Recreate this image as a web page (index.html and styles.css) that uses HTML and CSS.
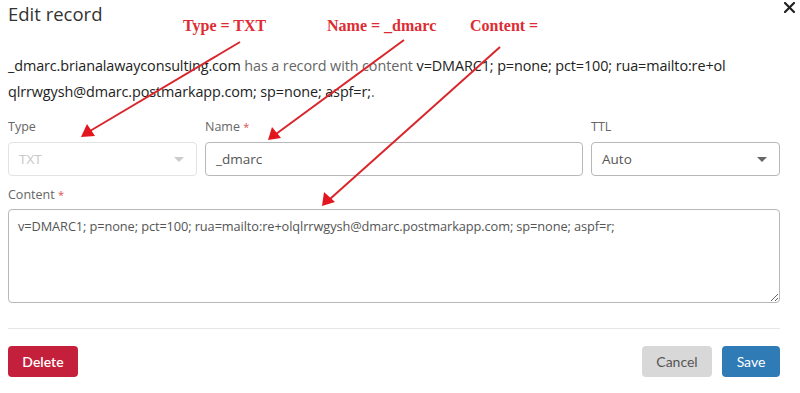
FILE: index.html
```html
<!DOCTYPE html>
<html>
<head>
<meta charset="utf-8">
<link rel="stylesheet" href="styles.css">
</head>
<body>
<div class="modal">
  <div class="modal-header">
    <h1 class="title">Edit record</h1>
    <button class="close" aria-label="Close">
      <svg width="11" height="11" viewBox="0 0 11 11"><path d="M1 1 L10 10 M10 1 L1 10" stroke="#222" stroke-width="2.2" stroke-linecap="round"/></svg>
    </button>
  </div>
  <p class="desc"><span class="strong">_dmarc.brianalawayconsulting.com</span> has a record with content <span class="strong">v=DMARC1; p=none; pct=100; rua=mailto:re+ol<br>qlrrwgysh@dmarc.postmarkapp.com; sp=none; aspf=r;</span>.</p>

  <div class="row">
    <div class="field">
      <label class="label">Type</label>
      <div class="select disabled"><span>TXT</span><span class="caret"></span></div>
    </div>
    <div class="field">
      <label class="label">Name <span class="req">*</span></label>
      <div class="input">_dmarc</div>
    </div>
    <div class="field">
      <label class="label">TTL</label>
      <div class="select"><span>Auto</span><span class="caret dark"></span></div>
    </div>
  </div>

  <div class="field content-field">
    <label class="label">Content <span class="req">*</span></label>
    <textarea class="textarea" readonly>v=DMARC1; p=none; pct=100; rua=mailto:re+olqlrrwgysh@dmarc.postmarkapp.com; sp=none; aspf=r;</textarea>
  </div>

  <hr class="divider">

  <div class="footer">
    <button class="btn btn-danger">Delete</button>
    <div class="right">
      <button class="btn btn-light">Cancel</button>
      <button class="btn btn-primary">Save</button>
    </div>
  </div>
</div>

<div class="annot">
  <svg class="arrows" width="800" height="393" viewBox="0 0 800 393">
    <g stroke="#d9262c" stroke-width="2" fill="none">
      <line x1="240" y1="42" x2="90" y2="131"/>
      <line x1="404" y1="40" x2="276" y2="134"/>
      <line x1="500" y1="47" x2="330" y2="199"/>
    </g>
    <g fill="#e3161f">
      <polygon points="81,137 87,124 95,136"/>
      <polygon points="268,140 272,127 281,138"/>
      <polygon points="322,206 324,192 335,202"/>
    </g>
  </svg>
  <span class="note n1">Type = TXT</span>
  <span class="note n2">Name = _dmarc</span>
  <span class="note n3">Content =</span>
</div>
</body>
</html>
```

FILE: styles.css
```css
* { box-sizing: border-box; }
html, body { margin: 0; padding: 0; background: #fff; }
body {
  width: 800px;
  height: 393px;
  overflow: hidden;
  position: relative;
  font-family: "Open Sans", "Noto Sans", sans-serif;
  color: #333;
}
.modal {
  padding: 0 20px 0 8px;
}
.modal-header {
  display: flex;
  justify-content: space-between;
  align-items: flex-start;
  height: 40px;
  margin-right: -20px;
}
.title {
  margin: 2px 0 0 0;
  font-size: 18.5px;
  font-weight: 400;
  color: #333;
  line-height: 24px;
}
.close {
  border: 0;
  background: none;
  padding: 0;
  margin: 2px 5px 0 0;
  width: 11px;
  height: 11px;
  display: flex;
}
.desc {
  margin: 13px 0 0 0;
  font-size: 14.4px;
  line-height: 26px;
  color: #666;
  letter-spacing: -0.1px;
}
.desc .strong { color: #222; }
.row {
  display: grid;
  grid-template-columns: 189px 378px 189px;
  gap: 8px;
  margin-top: 14px;
}
.field { display: flex; flex-direction: column; }
.label {
  font-size: 12.5px;
  color: #666;
  line-height: 16px;
  height: 16px;
  margin-bottom: 7px;
}
.req { color: #d9534f; font-size: 11px; }
.select, .input {
  height: 34px;
  border: 1px solid #b8b8b8;
  border-radius: 4px;
  display: flex;
  align-items: center;
  justify-content: space-between;
  padding: 0 12px 0 10px;
  font-size: 13.5px;
  color: #555;
  background: #fff;
}
.select.disabled {
  border-color: #e3e3e3;
  color: #c8c8c8;
}
.caret {
  width: 0;
  height: 0;
  border-left: 5px solid transparent;
  border-right: 5px solid transparent;
  border-top: 5px solid #ccc;
}
.caret.dark { border-top-color: #666; }
.content-field { margin-top: 11px; }
.content-field .label { margin-bottom: 6px; }
.textarea {
  display: block;
  width: 772px;
  height: 94px;
  border: 1px solid #b8b8b8;
  border-radius: 4px;
  padding: 6px 9px;
  font-family: "Open Sans", "Noto Sans", sans-serif;
  font-size: 12.8px;
  line-height: 20px;
  color: #555;
  resize: vertical;
  outline: none;
  letter-spacing: -0.1px;
}
.divider {
  border: 0;
  border-top: 1px solid #e6e6e6;
  margin: 25px 0 0 0;
  width: 772px;
}
.footer {
  display: flex;
  justify-content: space-between;
  margin-top: 17px;
  width: 772px;
}
.right { display: flex; gap: 10px; }
.btn {
  height: 31px;
  border: 0;
  border-radius: 4px;
  font-family: Lato, "Open Sans", sans-serif;
  font-size: 14px;
  padding: 0;
  color: #fff;
}
.btn-danger { background: #c41f3b; width: 70px; font-weight: 600; }
.btn-light { background: #d8d8d8; color: #555; width: 70px; }
.btn-primary { background: #2e7bb6; width: 58px; }

.annot {
  position: absolute;
  left: 0;
  top: 0;
  width: 800px;
  height: 393px;
  pointer-events: none;
}
.arrows { position: absolute; left: 0; top: 0; }
.note {
  position: absolute;
  font-family: "Liberation Serif", serif;
  font-weight: 700;
  font-size: 16px;
  color: #dd2c33;
  line-height: 18px;
  white-space: nowrap;
}
.n1 { left: 183px; top: 17px; }
.n2 { left: 327px; top: 17px; }
.n3 { left: 470px; top: 17px; }
```
